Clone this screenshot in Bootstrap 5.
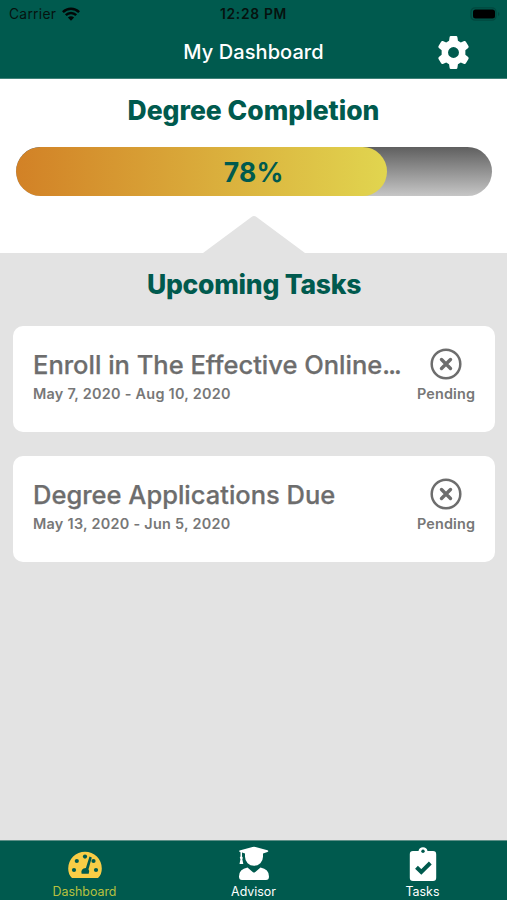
<!DOCTYPE html>
<html lang="en">
<head>
<meta charset="utf-8">
<meta name="viewport" content="width=device-width, initial-scale=1">
<title>My Dashboard</title>
<link href="https://cdn.jsdelivr.net/npm/bootstrap@5.3.0/dist/css/bootstrap.min.css" rel="stylesheet">
<style>
:root { --brand: #005a4e; --canvas: #e3e3e3; --ink: #6d6d6d; }
body { font-family: Inter, "Liberation Sans", sans-serif; background: var(--canvas); color: var(--ink); height: 900px; overflow: hidden; }
svg { display: block; }
.app-head { background: var(--brand); height: 79px; border-bottom: 1px solid #3f8178; }
.status { height: 27px; color: #06120f; font-size: 13.8px; letter-spacing: .28px; line-height: 27px; padding: 1px 7px 0 9px; }
.status svg { margin-left: 6px; margin-top: -1px; }
.status-time { font-weight: 600; letter-spacing: .7px; white-space: nowrap; }
.side { width: 107px; }
.app-title { font-size: 20px; line-height: 51px; font-weight: 500; letter-spacing: .08px; }
.heading { color: var(--brand); font-weight: 800; font-size: 26.5px; line-height: 32px; margin: 0; letter-spacing: -.15px; }
.completion { height: 173.5px; padding-top: 15px; }
.completion .heading { line-height: 32px; letter-spacing: 0; }
.meter { height: 49px; margin: 21px 15px 20px 15.5px; border-radius: 25px; background: linear-gradient(#5f5f5f, #c6c6c6); }
.meter-fill { border-radius: 25px; background: linear-gradient(90deg, #d28126, #e1d54f); }
.meter-label { color: var(--brand); font-weight: 700; font-size: 26.5px; line-height: 50px; letter-spacing: .3px; }
.tasks { padding: 15.5px 12px 0 13px; }
.tasks .heading { margin-bottom: 26px; letter-spacing: -.25px; }
.task { height: 106px; border: 0; border-radius: 10px; padding: 22px 20px 0 20px; margin-bottom: 24.3px; color: var(--ink); }
.task svg { margin-top: -1px; margin-bottom: 1px; }
.task-name { font-size: 25.5px; line-height: 34px; font-weight: 500; -webkit-text-stroke: .25px; }
.clip-dots { letter-spacing: -1.9px; }
.task-date { font-size: 14.4px; line-height: 24px; font-weight: 600; color: #777; letter-spacing: .28px; }
.task-state { width: 58px; }
.task-state .task-date { letter-spacing: .15px; }
.tabs { height: 60px; background: var(--brand); border-top: 1px solid #5d8f87; color: #fff; font-size: 12.4px; line-height: 17px; }
.tabs a { color: inherit; text-decoration: none; padding-top: 5px; }
.tabs a.active { color: #b8c13f; }
</style>
</head>
<body class="d-flex flex-column">
<header class="app-head flex-shrink-0">
  <div class="status d-flex align-items-center position-relative">
    <span>Carrier</span>
    <svg width="18" height="14" viewBox="0 0 18 14" fill="none" stroke="#020706" stroke-width="2.5"><path d="M.9 5.1C5.5.6 12.5.6 17.1 5.1M3.8 8.1c3-2.900 7.400-2.900 10.400 0"/><path d="M9 13.700 5.900 10.500c1.700-1.600 4.500-1.600 6.200 0z" fill="#020706" stroke="none"/></svg>
    <span class="status-time position-absolute start-50 translate-middle-x">12:28 PM</span>
    <svg class="ms-auto" width="30" height="14" viewBox="0 0 30 14"><rect x="1" y=".8" width="25" height="12.400" rx="4" fill="none" stroke="#00483f" stroke-width="1.200"/><rect x="3" y="2.600" width="22" height="9" rx="2.500" fill="#000"/><path d="M28 5v4q1.400-.7 1.400-2T28 5" fill="#00483f"/></svg>
  </div>
  <div class="d-flex align-items-center text-white">
    <span class="side"></span>
    <div class="app-title flex-grow-1 text-center">My Dashboard</div>
    <div class="side d-flex justify-content-center">
      <svg width="33" height="33" viewBox="0 0 32 32" fill="#fff"><path fill-rule="evenodd" d="M12.200 1.200Q12.300 0 13.500 0h5q1.200 0 1.300 1.200l.5 3.400 2.800 1.600 3.200-1.300q1.100-.4 1.700.6l2.500 4.300q.6 1-.3 1.800l-2.700 2.100v4.600l2.700 2.100q.9.800.3 1.800L28 26.500q-.6 1-1.700.6l-3.200-1.300-2.800 1.600-.5 3.400Q19.700 32 18.500 32h-5q-1.200 0-1.300-1.200l-.5-3.400-2.800-1.600-3.200 1.300q-1.100.4-1.700-.6l-2.500-4.300q-.6-1 .3-1.800l2.700-2.100v-4.600l-2.700-2.100q-.9-.8-.3-1.800L4 5.500q.6-1 1.700-.6l3.200 1.300 2.800-1.600zM16 10.700a5.300 5.300 0 1 0 0 10.600 5.300 5.300 0 0 0 0-10.600z"/></svg>
    </div>
  </div>
</header>

<main class="flex-grow-1">
  <section class="completion bg-white text-center">
    <h1 class="heading">Degree Completion</h1>
    <div class="meter progress position-relative">
      <div class="meter-fill progress-bar" role="progressbar" aria-valuenow="78" aria-valuemin="0" aria-valuemax="100" style="width:78%"></div>
      <span class="meter-label position-absolute start-50 translate-middle-x">78%</span>
    </div>
    <svg class="mx-auto" width="102" height="37" viewBox="0 0 102 37"><path d="M0 37 48.500 .9q2.500-1.700 5 0L102 37z" fill="#e3e3e3"/></svg>
  </section>
  <section class="tasks">
    <h2 class="heading text-center">Upcoming Tasks</h2>
    <article class="task card flex-row justify-content-between">
      <div>
        <div class="task-name">Enroll in The Effective Online<span class="clip-dots">...</span></div>
        <div class="task-date">May 7, 2020 - Aug 10, 2020</div>
      </div>
      <div class="task-state d-flex flex-column align-items-center">
        <svg width="34" height="34" viewBox="0 0 34 34" fill="none" stroke="#6d6d6d"><circle cx="17" cy="17" r="14.300" stroke-width="2.500"/><path d="m12.500 12.500 9 9m0-9-9 9" stroke-width="3.400" stroke-linecap="round"/></svg>
        <span class="task-date">Pending</span>
      </div>
    </article>
    <article class="task card flex-row justify-content-between">
      <div>
        <div class="task-name">Degree Applications Due</div>
        <div class="task-date">May 13, 2020 - Jun 5, 2020</div>
      </div>
      <div class="task-state d-flex flex-column align-items-center">
        <svg width="34" height="34" viewBox="0 0 34 34" fill="none" stroke="#6d6d6d"><circle cx="17" cy="17" r="14.300" stroke-width="2.500"/><path d="m12.500 12.500 9 9m0-9-9 9" stroke-width="3.400" stroke-linecap="round"/></svg>
        <span class="task-date">Pending</span>
      </div>
    </article>
  </section>
</main>

<nav class="tabs row g-0 flex-shrink-0 text-center">
  <a href="#" class="col active d-flex flex-column align-items-center">
    <svg width="36" height="37" viewBox="0 0 36 37"><path d="M4.500 31.500Q1.200 28 1.200 22.500a16.800 16.800 0 0 1 33.600 0q0 5.500-3.300 9-.6.500-1.500.5H6q-.9 0-1.500-.5z" fill="#f8cd46"/><g fill="#005a4e"><circle cx="7" cy="24" r="2.100"/><circle cx="9.800" cy="15" r="2.100"/><circle cx="18" cy="10.600" r="2.100"/><circle cx="26.500" cy="15" r="2.100"/><circle cx="29" cy="24" r="2.100"/><path d="m22.500 10.600 2.300.8-3.300 11.800q1.700 2.100.2 4.600h-7.100q-1.300-5.200 4.300-5.700z"/></g></svg>
    <span>Dashboard</span>
  </a>
  <a href="#" class="col d-flex flex-column align-items-center">
    <svg width="36" height="37" viewBox="0 0 36 37" fill="#fff"><path d="M3.500 4.600 16.500 1q1.500-.4 3 0l12 3.200q1.700.8 0 1.700L27 7.400v3.400a9 9 0 1 1-18 0V7.400L6 6.600v4q1.400 1.200.3 2.500l1 5H3.500l1-5q-1.300-1.300 0-2.500V6.200q-2-.7-1-1.600zM11.500 21.500l5.500 4.700q1 .8 2 0l5.500-4.700q8.500 1.500 8.500 9 0 3.500-3 3.500H6q-3 0-3-3.500 0-7.500 8.500-9z"/></svg>
    <span>Advisor</span>
  </a>
  <a href="#" class="col d-flex flex-column align-items-center">
    <svg width="36" height="37" viewBox="0 0 36 37"><path d="M8 5h5.500a4.600 4.600 0 0 1 9 0H28q3.200 0 3.200 3.200v23.500q0 3.200-3.200 3.200H8q-3.200 0-3.200-3.200V8.200Q4.800 5 8 5z" fill="#fff"/><circle cx="18" cy="5.300" r="1.700" fill="#005a4e"/><path d="m11.500 21.300 4.800 4.700 9-9" fill="none" stroke="#005a4e" stroke-width="4"/></svg>
    <span>Tasks</span>
  </a>
</nav>
<script src="https://cdn.jsdelivr.net/npm/bootstrap@5.3.0/dist/js/bootstrap.bundle.min.js"></script>
</body>
</html>
